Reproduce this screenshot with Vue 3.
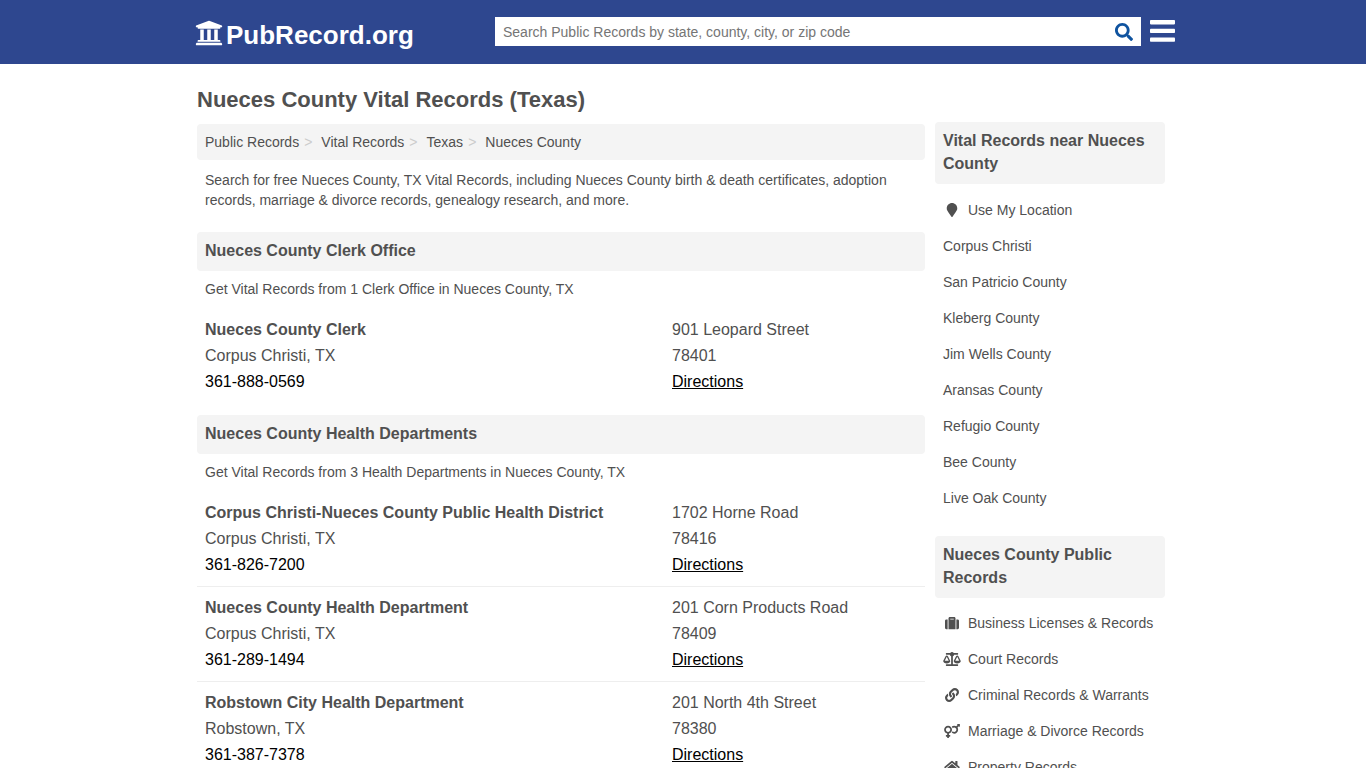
<script setup>
const crumbs = ['Public Records', 'Vital Records', 'Texas', 'Nueces County']

const sections = [
  {
    title: 'Nueces County Clerk Office',
    intro: 'Get Vital Records from 1 Clerk Office in Nueces County, TX',
    offices: [
      { name: 'Nueces County Clerk', city: 'Corpus Christi, TX', phone: '361-888-0569', street: '901 Leopard Street', zip: '78401' },
    ],
  },
  {
    title: 'Nueces County Health Departments',
    intro: 'Get Vital Records from 3 Health Departments in Nueces County, TX',
    offices: [
      { name: 'Corpus Christi-Nueces County Public Health District', city: 'Corpus Christi, TX', phone: '361-826-7200', street: '1702 Horne Road', zip: '78416' },
      { name: 'Nueces County Health Department', city: 'Corpus Christi, TX', phone: '361-289-1494', street: '201 Corn Products Road', zip: '78409' },
      { name: 'Robstown City Health Department', city: 'Robstown, TX', phone: '361-387-7378', street: '201 North 4th Street', zip: '78380' },
    ],
  },
]

const nearby = [
  'Corpus Christi', 'San Patricio County', 'Kleberg County', 'Jim Wells County',
  'Aransas County', 'Refugio County', 'Bee County', 'Live Oak County',
]

const topics = [
  {
    label: 'Business Licenses & Records',
    box: '0 0 512 512',
    path: 'M128 480h256V80c0-26.5-21.5-48-48-48H176c-26.5 0-48 21.5-48 48v400zm64-384h128v32H192V96zm320 80v256c0 26.5-21.5 48-48 48h-48V128h48c26.5 0 48 21.5 48 48zM96 480H48c-26.5 0-48-21.5-48-48V176c0-26.5 21.5-48 48-48h48v352z',
  },
  {
    label: 'Court Records',
    box: '0 0 640 512',
    path: 'M256 336h-.02c0-16.18 1.34-8.73-85.05-181.51-17.65-35.29-68.19-35.36-85.87 0C-2.06 328.75.02 320.33.02 336H0c0 44.18 57.31 80 128 80s128-35.82 128-80zM128 176l72 144H56l72-144zm511.98 160c0-16.18 1.34-8.73-85.05-181.51-17.65-35.29-68.19-35.36-85.87 0-87.12 174.26-85.04 165.84-85.04 181.51H384c0 44.18 57.31 80 128 80s128-35.82 128-80h-.02zM440 320l72-144 72 144H440zm88 128H352V153.25c23.51-10.29 41.16-31.48 46.39-57.25H528c8.84 0 16-7.16 16-16V48c0-8.84-7.16-16-16-16H383.64C369.04 12.68 346.09 0 320 0s-49.04 12.68-63.64 32H112c-8.84 0-16 7.16-16 16v32c0 8.84 7.16 16 16 16h129.61c5.23 25.76 22.87 46.96 46.39 57.25V448H112c-8.84 0-16 7.16-16 16v32c0 8.84 7.16 16 16 16h416c8.84 0 16-7.16 16-16v-32c0-8.84-7.16-16-16-16z',
  },
  {
    label: 'Criminal Records & Warrants',
    box: '0 0 512 512',
    path: 'M326.612 185.391c59.747 59.809 58.927 155.698.36 214.59-.11.12-.24.25-.36.37l-67.2 67.2c-59.27 59.27-155.699 59.262-214.96 0-59.27-59.26-59.27-155.7 0-214.96l37.106-37.106c9.84-9.84 26.786-3.3 27.294 10.606.648 17.722 3.826 35.527 9.69 52.721 1.986 5.822.567 12.262-3.783 16.612l-13.087 13.087c-28.026 28.026-28.905 73.66-1.155 101.96 28.024 28.579 74.086 28.749 102.325.51l67.2-67.19c28.191-28.191 28.073-73.757 0-101.83-3.701-3.694-7.429-6.564-10.341-8.569a16.037 16.037 0 0 1-6.947-12.606c-.396-10.567 3.348-21.456 11.698-29.806l21.054-21.055c5.521-5.521 14.182-6.199 20.584-1.731a152.482 152.482 0 0 1 20.522 17.197zM467.547 44.449c-59.261-59.262-155.69-59.27-214.96 0l-67.2 67.2c-.12.12-.25.25-.36.37-58.566 58.892-59.387 154.781.36 214.59a152.454 152.454 0 0 0 20.521 17.196c6.402 4.468 15.064 3.789 20.584-1.731l21.054-21.055c8.35-8.35 12.094-19.239 11.698-29.806a16.037 16.037 0 0 0-6.947-12.606c-2.912-2.005-6.64-4.875-10.341-8.569-28.073-28.073-28.191-73.639 0-101.83l67.2-67.19c28.239-28.239 74.3-28.069 102.325.51 27.75 28.3 26.872 73.934-1.155 101.96l-13.087 13.087c-4.35 4.35-5.769 10.79-3.783 16.612 5.864 17.194 9.042 34.999 9.69 52.721.509 13.906 17.454 20.446 27.294 10.606l37.106-37.106c59.271-59.259 59.271-155.699.001-214.959z',
  },
  {
    label: 'Marriage & Divorce Records',
    box: '0 0 576 512',
    path: 'M564 0h-79c-10.7 0-16 12.9-8.5 20.5l16.9 16.9-48.7 48.7C422.5 72.1 396.2 64 368 64c-33.7 0-64.6 11.6-89.2 30.9 14 16.7 25 36 32.1 57.1 14.5-14.8 34.7-24 57.1-24 44.1 0 80 35.9 80 80s-35.9 80-80 80c-22.3 0-42.6-9.2-57.1-24-7.1 21.1-18 40.4-32.1 57.1 24.5 19.4 55.5 30.9 89.2 30.9 79.5 0 144-64.5 144-144 0-28.2-8.1-54.5-22.1-76.7l48.7-48.7 16.9 16.9c2.4 2.4 5.4 3.5 8.4 3.5 6.2 0 12.1-4.8 12.1-12V12c0-6.6-5.4-12-12-12zM144 64C64.5 64 0 128.5 0 208c0 68.5 47.9 125.9 112 140.4V400H76c-6.6 0-12 5.4-12 12v40c0 6.6 5.4 12 12 12h36v36c0 6.6 5.4 12 12 12h40c6.6 0 12-5.4 12-12v-36h36c6.6 0 12-5.4 12-12v-40c0-6.6-5.4-12-12-12h-36v-51.6c64.1-14.6 112-71.9 112-140.4 0-79.5-64.5-144-144-144zm0 224c-44.1 0-80-35.9-80-80s35.9-80 80-80 80 35.9 80 80-35.9 80-80 80z',
  },
  {
    label: 'Property Records',
    box: '0 0 576 512',
    path: 'M280.37 148.26L96 300.11V464a16 16 0 0 0 16 16l112.06-.29a16 16 0 0 0 15.92-16V368a16 16 0 0 1 16-16h64a16 16 0 0 1 16 16v95.64a16 16 0 0 0 16 16.05L464 480a16 16 0 0 0 16-16V300L295.67 148.26a12.19 12.19 0 0 0-15.3 0zM571.6 251.47L488 182.56V44.05a12 12 0 0 0-12-12h-56a12 12 0 0 0-12 12v72.61L318.47 43a48 48 0 0 0-61 0L4.34 251.47a12 12 0 0 0-1.6 16.9l25.5 31A12 12 0 0 0 45.15 301l235.22-193.74a12.19 12.19 0 0 1 15.3 0L530.9 301a12 12 0 0 0 16.9-1.6l25.5-31a12 12 0 0 0-1.7-16.93z',
  },
]
</script>

<template>
  <div class="page">
    <header class="topbar">
      <div class="topbar-inner">
        <a class="logo" href="#">
          <svg class="logo-icon" viewBox="0 0 512 512" aria-hidden="true">
            <path d="M496 128v16a8 8 0 0 1-8 8h-24v12c0 6.627-5.373 12-12 12H60c-6.627 0-12-5.373-12-12v-12H24a8 8 0 0 1-8-8v-16a8 8 0 0 1 4.941-7.392l232-88a7.996 7.996 0 0 1 6.118 0l232 88A8 8 0 0 1 496 128zm-24 304H40c-13.255 0-24 10.745-24 24v16a8 8 0 0 0 8 8h464a8 8 0 0 0 8-8v-16c0-13.255-10.745-24-24-24zM96 192v192H60c-6.627 0-12 5.373-12 12v20h416v-20c0-6.627-5.373-12-12-12h-36V192h-64v192h-64V192h-64v192h-64V192H96z" />
          </svg>
          <span>PubRecord.org</span>
        </a>
        <form class="search" role="search" @submit.prevent>
          <input class="search-input" type="text" aria-label="Search public records" placeholder="Search Public Records by state, county, city, or zip code" />
          <button class="search-button" type="submit" aria-label="Search">
            <svg viewBox="0 0 512 512" aria-hidden="true">
              <path d="M505 442.7L405.3 343c-4.5-4.5-10.6-7-17-7H372c27.6-35.3 44-79.7 44-128C416 93.1 322.9 0 208 0S0 93.1 0 208s93.1 208 208 208c48.3 0 92.7-16.4 128-44v16.3c0 6.4 2.5 12.5 7 17l99.7 99.7c9.4 9.4 24.6 9.4 33.9 0l28.3-28.3c9.4-9.4 9.4-24.6.1-34zM208 336c-70.7 0-128-57.2-128-128 0-70.7 57.2-128 128-128 70.7 0 128 57.2 128 128 0 70.7-57.2 128-128 128z" />
            </svg>
          </button>
        </form>
        <button class="menu" type="button" aria-label="Menu">
          <svg viewBox="0 0 25 22" aria-hidden="true">
            <rect width="25" height="4.4" rx="0.8" />
            <rect y="8.7" width="25" height="4.4" rx="0.8" />
            <rect y="17.4" width="25" height="4.4" rx="0.8" />
          </svg>
        </button>
      </div>
    </header>

    <div class="content">
      <main class="main">
        <h1>Nueces County Vital Records (Texas)</h1>
        <nav aria-label="Breadcrumb">
          <ol class="crumbs">
            <li v-for="c in crumbs" :key="c"><a href="#">{{ c }}</a></li>
          </ol>
        </nav>
        <p class="intro">
          Search for free Nueces County, TX Vital Records, including Nueces County birth &amp; death certificates,
          adoption records, marriage &amp; divorce records, genealogy research, and more.
        </p>

        <section v-for="s in sections" :key="s.title" class="section">
          <h2>{{ s.title }}</h2>
          <p class="section-intro">{{ s.intro }}</p>
          <article v-for="o in s.offices" :key="o.name" class="office">
            <div>
              <a class="name" href="#">{{ o.name }}</a>
              <span>{{ o.city }}</span>
              <a class="strong-link" href="#">{{ o.phone }}</a>
            </div>
            <div>
              <span>{{ o.street }}</span>
              <span>{{ o.zip }}</span>
              <a class="strong-link directions" href="#">Directions</a>
            </div>
          </article>
        </section>
      </main>

      <aside class="side">
        <section>
          <h2>Vital Records near Nueces County</h2>
          <ul>
            <li>
              <a href="#">
                <svg class="icon" viewBox="0 0 384 512" aria-hidden="true">
                  <path d="M172.268 501.67C26.97 291.031 0 269.413 0 192 0 85.961 85.961 0 192 0s192 85.961 192 192c0 77.413-26.97 99.031-172.268 309.67-9.535 13.774-29.93 13.773-39.464 0z" />
                </svg>
                <span>Use My Location</span>
              </a>
            </li>
            <li v-for="n in nearby" :key="n"><a href="#">{{ n }}</a></li>
          </ul>
        </section>
        <section>
          <h2>Nueces County Public Records</h2>
          <ul>
            <li v-for="t in topics" :key="t.label">
              <a href="#">
                <svg class="icon" :viewBox="t.box" aria-hidden="true"><path :d="t.path" /></svg>
                <span>{{ t.label }}</span>
              </a>
            </li>
          </ul>
        </section>
      </aside>
    </div>
  </div>
</template>

<style>
body {
  margin: 0;
  background: #fff;
}
</style>

<style scoped>
.page {
  font-family: "Liberation Sans", Arial, sans-serif;
  font-size: 14px;
  line-height: 20px;
  color: #505050;
}
.page * {
  box-sizing: border-box;
}
a {
  color: inherit;
  text-decoration: none;
}
svg {
  display: block;
  fill: currentColor;
}
h1, h2, p, ol, ul {
  margin: 0;
  padding: 0;
}
ol, ul {
  list-style: none;
}

.topbar {
  background: #2e478f;
}
.topbar-inner {
  display: flex;
  align-items: flex-start;
  max-width: 984px;
  height: 64px;
  margin: 0 auto;
  padding: 17px 0 0 4px;
}
.logo {
  display: flex;
  flex: 0 0 300px;
  gap: 3px;
  align-items: center;
  height: 36px;
  color: #fff;
  font-size: 26px;
  font-weight: bold;
}
.logo-icon {
  width: 28px;
  height: 28px;
  margin-bottom: 4px;
}
.search {
  display: flex;
  flex: 1;
  height: 29px;
  background: #fff;
}
.search-input {
  flex: 1;
  min-width: 0;
  padding: 0 8px;
  border: 0;
  outline: 0;
  background: transparent;
  color: #505050;
  font: inherit;
}
.search-input::placeholder {
  color: #757575;
  opacity: 1;
}
.search-button {
  padding: 6px 8px 0;
  border: 0;
  background: transparent;
  color: #0f539f;
}
.search-button svg {
  width: 18px;
  height: 18px;
  margin-bottom: 5px;
}
.menu {
  margin: 3px 0 0 9px;
  padding: 0;
  border: 0;
  background: transparent;
  color: #fff;
}
.menu svg {
  width: 25px;
  height: 22px;
}

.content {
  display: flex;
  gap: 10px;
  max-width: 984px;
  margin: 0 auto;
  padding: 0 10px 0 6px;
}
.main {
  flex: 1;
  min-width: 0;
}
h1 {
  padding: 24px 0 12px;
  font-size: 22px;
  line-height: 24px;
}
h2 {
  padding: 7px 8px 9px;
  border-radius: 4px;
  background: #f4f4f4;
  font-size: 16px;
  line-height: 23px;
}
.crumbs {
  display: flex;
  padding: 8px;
  border-radius: 4px;
  background: #f4f4f4;
}
.crumbs li + li::before {
  content: ">";
  padding: 0 9px 0 5px;
  color: #ccc;
}
.intro {
  padding: 10px 8px 0;
}
.section {
  padding: 22px 0 0;
}
.section + .section {
  padding-top: 12px;
}
.section-intro {
  padding: 8px 8px 10px;
}
.office {
  display: grid;
  grid-template-columns: 467px 1fr;
  padding: 8px;
  font-size: 16px;
  line-height: 26px;
}
.office + .office {
  border-top: 1px solid #eee;
}
.office > div {
  display: flex;
  flex-direction: column;
  align-items: flex-start;
}
.name {
  font-weight: bold;
}
.strong-link {
  color: #000;
}
.directions {
  text-decoration: underline;
}

.side {
  flex: 0 0 230px;
  padding-top: 58px;
}
.side ul {
  padding: 8px 8px 20px;
}
.side section + section ul {
  padding-top: 7px;
}
.side li a {
  display: flex;
  align-items: center;
  padding: 8px 0;
}
.icon {
  width: 18px;
  height: 14px;
  margin-right: 7px;
}
</style>
